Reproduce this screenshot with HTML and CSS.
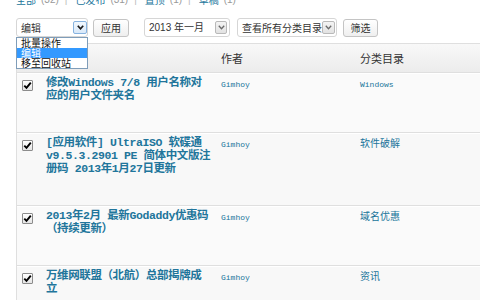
FILE: index.html
```html
<!DOCTYPE html>
<html lang="zh-CN">
<head>
<meta charset="utf-8">
<title>文章</title>
<link rel="stylesheet" href="styles.css">
</head>
<body>
<div class="page">
  <ul class="subsubsub">
    <li><span class="link">全部</span><span class="count">(32)</span><span class="sep">|</span></li>
    <li><span class="link">已发布</span><span class="count">(31)</span><span class="sep">|</span></li>
    <li><span class="link">置顶</span><span class="count">(1)</span><span class="sep">|</span></li>
    <li><span class="link">草稿</span><span class="count">(1)</span></li>
  </ul>

  <div class="tablenav">
    <div class="sel sel-bulk">
      <span class="sel-text">编辑</span>
      <span class="arrow arrow-blue"><svg width="7" height="5" viewBox="0 0 7 5"><path d="M0.8 0.8 L3.5 3.8 L6.2 0.8" fill="none" stroke="#1a1a1a" stroke-width="1.7"/></svg></span>
      <ul class="listbox">
        <li>批量操作</li>
        <li class="hl">编辑</li>
        <li>移至回收站</li>
      </ul>
    </div>
    <button class="btn btn-apply">应用</button>
    <div class="sel sel-date">
      <span class="sel-text"><span class="latin">2013 </span>年一月</span>
      <span class="arrow arrow-gray"><svg width="7" height="5" viewBox="0 0 7 5"><path d="M0.8 0.8 L3.5 3.8 L6.2 0.8" fill="none" stroke="#6a6a6a" stroke-width="1.3"/></svg></span>
    </div>
    <div class="sel sel-cat">
      <span class="sel-text">查看所有分类目录</span>
      <span class="arrow arrow-gray arrow-cat"><svg width="7" height="5" viewBox="0 0 7 5"><path d="M0.8 0.8 L3.5 3.8 L6.2 0.8" fill="none" stroke="#6a6a6a" stroke-width="1.3"/></svg></span>
    </div>
    <button class="btn btn-filter">筛选</button>
  </div>

  <div class="list">
    <div class="head">
      <div class="cb-head"><span class="cb"></span></div>
      <div></div>
      <div>作者</div>
      <div>分类目录</div>
    </div>

    <div class="row">
      <div class="cb-cell"><span class="cb"><svg width="9" height="9" viewBox="0 0 9 9"><path d="M1.3 4.6 L3.5 6.9 L7.8 1.6" fill="none" stroke="#000" stroke-width="1.9"/></svg></span></div>
      <div class="title-cell"><div class="title">修改Windows 7/8 用户名称对应的用户文件夹名</div></div>
      <div class="author"><span class="mono">Gimhoy</span></div>
      <div class="cat"><span class="mono">Windows</span></div>
    </div>

    <div class="row alt">
      <div class="cb-cell"><span class="cb"><svg width="9" height="9" viewBox="0 0 9 9"><path d="M1.3 4.6 L3.5 6.9 L7.8 1.6" fill="none" stroke="#000" stroke-width="1.9"/></svg></span></div>
      <div class="title-cell"><div class="title">[应用软件] UltraISO 软碟通 v9.5.3.2901 PE 简体中文版注册码 2013年1月27日更新</div></div>
      <div class="author"><span class="mono">Gimhoy</span></div>
      <div class="cat">软件破解</div>
    </div>

    <div class="row">
      <div class="cb-cell"><span class="cb"><svg width="9" height="9" viewBox="0 0 9 9"><path d="M1.3 4.6 L3.5 6.9 L7.8 1.6" fill="none" stroke="#000" stroke-width="1.9"/></svg></span></div>
      <div class="title-cell"><div class="title">2013年2月 最新Godaddy优惠码（持续更新）</div></div>
      <div class="author"><span class="mono">Gimhoy</span></div>
      <div class="cat">域名优惠</div>
    </div>

    <div class="row alt">
      <div class="cb-cell"><span class="cb"><svg width="9" height="9" viewBox="0 0 9 9"><path d="M1.3 4.6 L3.5 6.9 L7.8 1.6" fill="none" stroke="#000" stroke-width="1.9"/></svg></span></div>
      <div class="title-cell"><div class="title">万维网联盟（北航）总部揭牌成立</div></div>
      <div class="author"><span class="mono">Gimhoy</span></div>
      <div class="cat">资讯</div>
    </div>
  </div>
</div>
</body>
</html>
```

FILE: styles.css
```css
html, body {
  margin: 0;
  padding: 0;
}
body {
  width: 480px;
  height: 300px;
  overflow: hidden;
  background: #fff;
  font-family: "Noto Sans CJK SC", sans-serif;
  color: #333;
}
.page {
  padding-left: 16px;
}

/* status links */
.subsubsub {
  list-style: none;
  margin: -6px 0 0;
  padding: 0;
  display: flex;
  height: 12px;
  font-size: 10px;
  line-height: 12px;
  white-space: nowrap;
}
.subsubsub li {
  display: flex;
}
.link {
  color: #21759b;
}
.count {
  color: #999;
  margin-left: 5px;
  font-family: "Liberation Sans", sans-serif;
}
.sep {
  color: #bbb;
  margin: 0 8px 0 6px;
  font-family: "Liberation Sans", sans-serif;
}

/* toolbar */
.tablenav {
  display: flex;
  align-items: flex-start;
  margin-top: 12px;
  height: 19px;
}
.sel {
  position: relative;
  box-sizing: border-box;
  height: 19px;
  border: 1px solid #d6d6d6;
  border-radius: 3px;
  background: #fff;
  display: flex;
  align-items: center;
  font-size: 10px;
  color: #333;
  padding-left: 4px;
  white-space: nowrap;
}
.sel-text {
  line-height: 12px;
}
.latin {
  font-family: "Liberation Sans", sans-serif;
}
.sel-bulk {
  width: 72px;
}
.sel-date {
  width: 86px;
  margin-left: 15px;
}
.sel-cat {
  width: 100px;
  margin-left: 7px;
}
.arrow {
  margin-left: auto;
  box-sizing: border-box;
  width: 14px;
  height: 13px;
  display: flex;
  align-items: center;
  justify-content: center;
  border-radius: 2px;
}
.arrow-blue {
  border: 1px solid #86b2df;
  background: linear-gradient(#f2f8fe, #d8e8f8);
}
.arrow-gray {
  width: 12px;
  margin-right: 2px;
  border: 1px solid #b9b9b9;
  background: linear-gradient(#f4f4f4, #e2e2e2);
}
.arrow-cat {
  width: 13px;
  margin-right: 1px;
}
.listbox {
  position: absolute;
  left: -1px;
  top: 18px;
  width: 72px;
  box-sizing: border-box;
  margin: 0;
  padding: 0;
  list-style: none;
  border: 1px solid #7f9db9;
  background: #fff;
  font-size: 10px;
  line-height: 10px;
  color: #111;
  z-index: 5;
}
.listbox li {
  height: 10px;
  padding-left: 4px;
}
.listbox li.hl {
  background: #3399ff;
  color: #fff;
}
.btn {
  box-sizing: border-box;
  height: 18px;
  margin: 1px 0 0;
  padding: 0;
  border: 1px solid #c4c4c4;
  border-radius: 3px;
  background: linear-gradient(#ffffff, #efefef);
  font-family: "Noto Sans CJK SC", sans-serif;
  font-size: 10px;
  line-height: 14px;
  color: #333;
}
.btn-apply {
  width: 36px;
  margin-left: 5px;
}
.btn-filter {
  width: 35px;
  margin-left: 6px;
}

/* list table */
.list {
  margin-top: 6px;
  width: 470px;
  border-top: 1px solid #dfdfdf;
  border-left: 1px solid #dfdfdf;
  background: #f9f9f9;
}
.head {
  display: grid;
  grid-template-columns: 29px 175px 139px 1fr;
  height: 28px;
  align-items: center;
  background: linear-gradient(#f8f8f8, #ececec);
  border-bottom: 1px solid #dfdfdf;
  font-size: 11px;
  color: #333;
}
.cb-head {
  padding-left: 5px;
  display: flex;
}
.row {
  display: grid;
  grid-template-columns: 29px 175px 139px 1fr;
  align-items: start;
  border-top: 1px solid #fff;
  border-bottom: 1px solid #dfdfdf;
  background: #fafafa;
}
.row.alt {
  background: #f8f8f8;
}
.cb-cell {
  padding: 6px 0 0 5px;
  display: flex;
}
.cb {
  box-sizing: border-box;
  width: 11px;
  height: 11px;
  border: 1px solid #8c8c8c;
  border-radius: 1px;
  background: linear-gradient(#ffffff, #e4e4e4);
  display: flex;
  align-items: center;
  justify-content: center;
}
.title-cell {
  padding: 2px 0 30px;
}
.title {
  width: 165.3px;
  font-family: "Liberation Mono", "Noto Sans CJK SC", monospace;
  font-weight: bold;
  font-size: 11.5px;
  line-height: 13px;
  letter-spacing: -0.4px;
  color: #21759b;
  text-spacing-trim: space-all;
}
.author, .cat {
  padding-top: 2px;
  line-height: 13px;
  color: #21759b;
  font-size: 10px;
}
.mono {
  font-family: "Liberation Mono", monospace;
  font-size: 8px;
}
```
